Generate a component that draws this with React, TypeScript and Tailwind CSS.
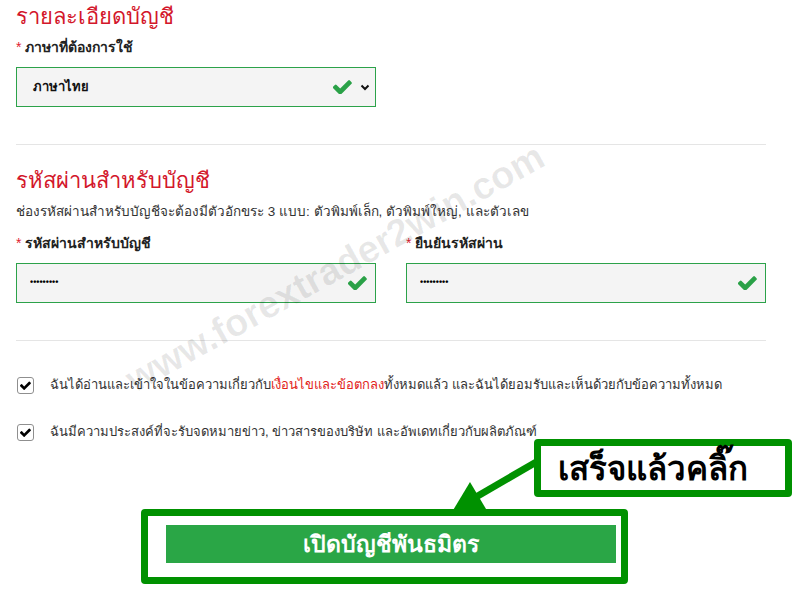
import React from 'react';

// FontAwesome 4 style check mark
const Check = ({ className = '', color = '#2aa147' }: { className?: string; color?: string }) => (
  <svg viewBox="130 350 1550 1090" className={className}>
    <path
      fill={color}
      d="M1671 566q0 40-28 68l-724 724-136 136q-28 28-68 28t-68-28l-136-136-362-362q-28-28-28-68t28-68l136-136q28-28 68-28t68 28l294 295 656-657q28-28 68-28t68 28l136 136q28 28 28 68z"
    />
  </svg>
);

const Chevron = ({ className = '' }: { className?: string }) => (
  <svg viewBox="0 0 10 7" className={className}>
    <path d="M1.5 1.5 L5 5 L8.5 1.5" fill="none" stroke="#111" strokeWidth="2" />
  </svg>
);

const Label = ({ children, className = '' }: { children: React.ReactNode; className?: string }) => (
  <div className={`text-[14px] leading-[20px] font-bold text-[#222] ${className}`}>
    <span className="text-[#e0202f] font-normal">*</span> {children}
  </div>
);

const PasswordBox = () => (
  <div className="h-[40px] border border-[#2ca24a] bg-[#f4f4f4] flex items-center pl-[13px] pr-[8px]">
    <input
      type="password"
      readOnly
      defaultValue="123456789"
      className="flex-1 min-w-0 bg-transparent outline-none text-[9px] font-bold text-black"
    />
    <Check className="w-[19px] h-[14px]" />
  </div>
);

const Tick = () => (
  <div className="w-[17px] h-[17px] shrink-0 border border-[#8f8f8f] rounded-[3px] bg-white flex items-center justify-center">
    <Check className="w-[11px] h-[9px]" color="#000" />
  </div>
);

export default function App() {
  return (
    <div className="relative w-[808px] h-[598px] overflow-hidden bg-white font-['Tahoma','Liberation_Sans',sans-serif] text-[#222]">
      <div className="w-[750px] ml-[16px] pt-[2px]">
        {/* Account details */}
        <h2 className="text-[22px] leading-[30px] text-[#d3172b]">รายละเอียดบัญชี</h2>
        <Label className="mt-[5px]">ภาษาที่ต้องการใช้</Label>
        <div className="mt-[10px] w-[360px] h-[40px] border border-[#2ca24a] bg-[#f4f4f4] flex items-center pl-[16px] pr-[5px]">
          <span className="flex-1 text-[13px] font-bold text-[#111]">ภาษาไทย</span>
          <Check className="w-[19px] h-[14px]" />
          <Chevron className="ml-[8px] w-[10px] h-[7px]" />
        </div>

        <div className="mt-[37px] h-px bg-[#e5e5e5]" />

        {/* Password */}
        <h2 className="mt-[21px] text-[22px] leading-[30px] text-[#d3172b]">รหัสผ่านสำหรับบัญชี</h2>
        <p className="mt-[6px] text-[13.5px] leading-[20px] text-[#333]">
          ช่องรหัสผ่านสำหรับบัญชีจะต้องมีตัวอักขระ 3 แบบ: ตัวพิมพ์เล็ก, ตัวพิมพ์ใหญ่, และตัวเลข
        </p>
        <div className="mt-[11px] grid grid-cols-2 gap-x-[30px]">
          <div>
            <Label>รหัสผ่านสำหรับบัญชี</Label>
            <div className="mt-[10px]">
              <PasswordBox />
            </div>
          </div>
          <div>
            <Label>ยืนยันรหัสผ่าน</Label>
            <div className="mt-[10px]">
              <PasswordBox />
            </div>
          </div>
        </div>

        <div className="mt-[37px] h-px bg-[#e5e5e5]" />

        {/* Agreements */}
        <div className="mt-[34px] flex items-center gap-[16px] pl-px h-[20px]">
          <Tick />
          <span className="text-[13px] text-[#333]">
            ฉันได้อ่านและเข้าใจในข้อความเกี่ยวกับ<span className="text-[#e2231a]">เงื่อนไขและข้อตกลง</span>ทั้งหมดแล้ว และฉันได้ยอมรับและเห็นด้วยกับข้อความทั้งหมด
          </span>
        </div>
        <div className="mt-[27px] flex items-center gap-[16px] pl-px h-[20px]">
          <Tick />
          <span className="text-[13px] text-[#333]">
            ฉันมีความประสงค์ที่จะรับจดหมายข่าว, ข่าวสารของบริษัท และอัพเดทเกี่ยวกับผลิตภัณฑ์
          </span>
        </div>

        <div className="mt-[83px] flex justify-center">
          <button className="w-[450px] h-[38px] bg-[#2aa646] text-white text-[23px] leading-none font-bold">
            เปิดบัญชีพันธมิตร
          </button>
        </div>
      </div>

      {/* Watermark */}
      <div className="pointer-events-none absolute left-[335px] top-[268px] -translate-x-1/2 -translate-y-1/2 -rotate-[29deg] whitespace-nowrap font-['Liberation_Sans',sans-serif] text-[38px] font-bold text-black/[0.09]">
        www.forextrader2win.com
      </div>

      {/* Annotation arrow */}
      <svg className="pointer-events-none absolute left-0 top-0" width="808" height="598">
        <line x1="538" y1="461" x2="476" y2="497" stroke="#009100" strokeWidth="7" />
        <polygon points="470,482 486,509 452,512" fill="#009100" />
      </svg>

      {/* Annotation frame round the button */}
      <div className="pointer-events-none absolute left-[141px] top-[509px] w-[487px] h-[75px] border-[7px] border-[#009100] rounded-[4px]" />

      {/* Callout */}
      <div className="absolute left-[534px] top-[439px] w-[258px] h-[58px] border-[7px] border-[#009100] rounded-[4px] bg-white flex items-center justify-center pr-[20px]">
        <span className="text-[33px] leading-none font-bold text-black">เสร็จแล้วคลิ๊ก</span>
      </div>
    </div>
  );
}
